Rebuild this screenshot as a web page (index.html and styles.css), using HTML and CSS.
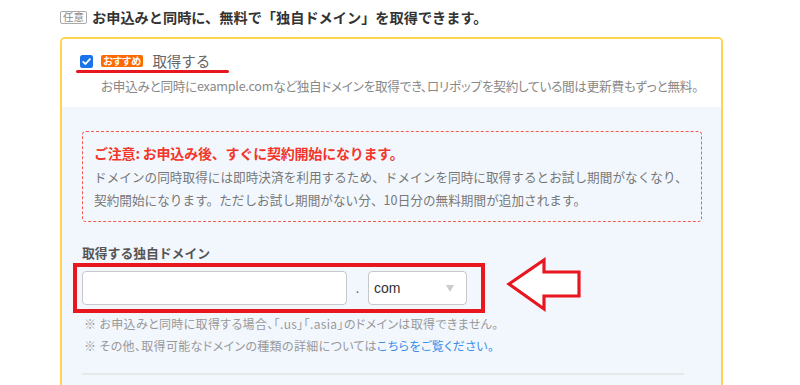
FILE: index.html
```html
<!DOCTYPE html>
<html lang="ja">
<head>
<meta charset="utf-8">
<link rel="stylesheet" href="styles.css">
</head>
<body>
<div class="page">
  <div class="heading">
    <span class="opt">任意</span>
    <span class="heading-text">お申込みと同時に、無料で「独自ドメイン」を取得できます。</span>
  </div>
  <div class="card">
    <div class="card-top">
      <div class="check-row">
        <span class="checkbox"><svg width="13" height="13" viewBox="0 0 13 13"><rect width="13" height="13" rx="2.5" fill="#1a73e8"/><path d="M3.2 6.8 L5.5 9 L9.9 4.2" fill="none" stroke="#fff" stroke-width="1.8" stroke-linecap="round" stroke-linejoin="round"/></svg></span>
        <span class="reco">おすすめ</span>
        <span class="get">取得する</span>
      </div>
      <div class="underline"></div>
      <p class="desc">お申込みと同時にexample.comなど独自ドメインを取得でき、ロリポップを契約している間は更新費もずっと無料。</p>
    </div>
    <div class="card-body">
      <div class="notice">
        <p class="notice-title">ご注意: お申込み後、すぐに契約開始になります。</p>
        <p class="notice-text">ドメインの同時取得には即時決済を利用するため、ドメインを同時に取得するとお試し期間がなくなり、<br>契約開始になります。ただしお試し期間がない分、10日分の無料期間が追加されます。</p>
      </div>
      <p class="label">取得する独自ドメイン</p>
      <div class="domain-line">
        <div class="domain-box">
          <input class="domain-input" type="text">
          <span class="dot">.</span>
          <div class="select"><span>com</span><span class="tri"></span></div>
        </div>
        <svg class="arrow" width="78" height="58" viewBox="0 0 78 58"><path d="M3 27 L38 3 L38 15 L73 15 L73 39 L38 39 L38 52 Z" fill="#fff" stroke="#e8171f" stroke-width="3.2" stroke-linejoin="miter"/></svg>
      </div>
      <p class="note">※ お申込みと同時に取得する場合、「.us」「.asia」のドメインは取得できません。</p>
      <p class="note">※ その他、取得可能なドメインの種類の詳細については<a class="link">こちらをご覧ください。</a></p>
      <div class="sep"></div>
    </div>
  </div>
</div>
</body>
</html>
```

FILE: styles.css
```css
html, body {
  margin: 0;
  padding: 0;
  background: #fff;
}
body {
  font-family: "Noto Sans CJK JP", "Noto Sans", sans-serif;
  color: #333;
}
p { margin: 0; white-space: nowrap; }
.page {
  padding: 7px 77px 0 60px;
}
.heading {
  display: flex;
  align-items: center;
  height: 20px;
}
.opt {
  display: inline-flex;
  align-items: center;
  justify-content: center;
  box-sizing: border-box;
  width: 27px;
  height: 13px;
  border: 1px solid #aaa;
  border-radius: 2px;
  color: #888;
  font-size: 10.5px;
  line-height: 1;
  margin-right: 5px;
}
.heading-text {
  font-size: 14.2px;
  font-weight: bold;
  color: #333;
  line-height: 20px;
}
.card {
  margin-top: 10px;
  border: 2px solid #ffd34e;
  border-radius: 5px;
  height: 400px;
  overflow: hidden;
}
.card-top {
  padding: 14px 0 12px 18px;
  background: #fff;
}
.check-row {
  display: flex;
  align-items: center;
  height: 16px;
}
.checkbox {
  display: inline-flex;
  width: 13px;
  height: 13px;
}
.reco {
  margin-left: 8px;
  background: #ff6a00;
  color: #fff;
  font-size: 10px;
  font-weight: bold;
  line-height: 12px;
  height: 12px;
  padding: 0 2px;
  border-radius: 2px;
  font-feature-settings: "palt";
  letter-spacing: 0.2px;
}
.get {
  margin-left: 9px;
  font-size: 14.5px;
  color: #666;
  line-height: 16px;
}
.underline {
  margin: 1px 0 0 -4px;
  width: 153px;
  height: 3px;
  border-radius: 2px;
  background: #e8171f;
}
.desc {
  margin: 4px 0 0 21px;
  font-size: 12.6px;
  line-height: 18px;
  color: #888;
  font-feature-settings: "palt";
  letter-spacing: -0.25px;
}
.card-body {
  background: #f2f7fe;
  padding: 24px 19px 0 20px;
  height: 300px;
}
.notice {
  border: 1px dashed #f55a4e;
  border-radius: 4px;
  padding: 10px 11px 10px 11px;
}
.notice-title {
  font-size: 14px;
  font-weight: bold;
  color: #f3362a;
  line-height: 23px;
  letter-spacing: -0.2px;
}
.notice-text {
  font-size: 12.6px;
  line-height: 23px;
  color: #777;
  letter-spacing: 0.05px;
}
.label {
  margin-top: 21px;
  font-size: 12.8px;
  font-weight: bold;
  color: #555;
  line-height: 20px;
}
.domain-line {
  display: flex;
  align-items: center;
}
.domain-box {
  display: flex;
  align-items: center;
  margin-left: -9px;
  width: 412px;
  box-sizing: border-box;
  border: 4px solid #e8171f;
  padding: 4px 13px 4px 5px;
}
.domain-input {
  box-sizing: border-box;
  width: 265px;
  height: 34px;
  border: 1px solid #c8c8c8;
  border-radius: 4px;
  background: #fff;
  margin: 0;
  padding: 0 8px;
}
.dot {
  width: 21px;
  text-align: center;
  color: #555;
  font-size: 14px;
  font-family: "Liberation Sans", sans-serif;
  line-height: 14px;
}
.select {
  box-sizing: border-box;
  width: 99px;
  height: 34px;
  border: 1px solid #c8c8c8;
  border-radius: 4px;
  background: #fff;
  display: flex;
  align-items: center;
  justify-content: space-between;
  padding: 0 12px 0 5px;
  font-family: "Liberation Sans", sans-serif;
  font-size: 14px;
  color: #333;
}
.tri {
  width: 0;
  height: 0;
  border-left: 4px solid transparent;
  border-right: 4px solid transparent;
  border-top: 7px solid #ccc;
}
.arrow {
  display: block;
  margin: -10px 0 -6px 21px;
}
.note {
  font-size: 12px;
  line-height: 22px;
  color: #999;
  margin-left: 2px;
  font-feature-settings: "palt";
  letter-spacing: 0.35px;
}
.link {
  color: #3b8ee8;
}
.sep {
  margin-top: 16px;
  width: 602px;
  height: 2px;
  background: #e6e8ea;
}
```
